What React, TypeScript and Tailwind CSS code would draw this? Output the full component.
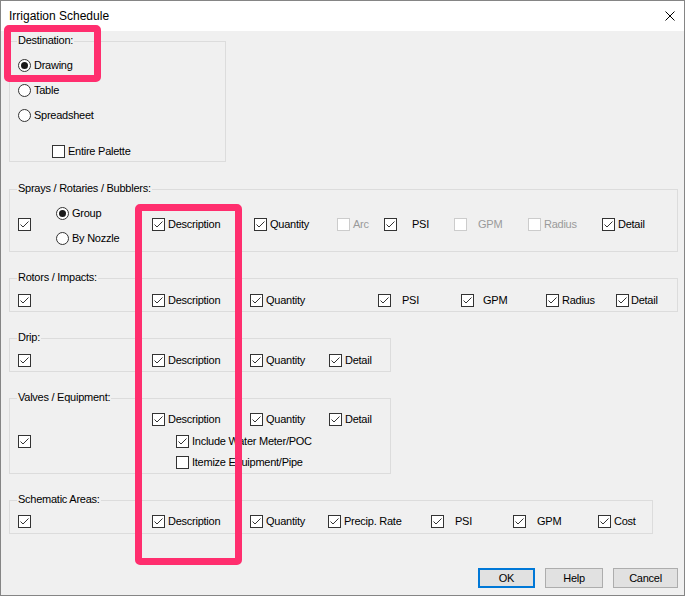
import type { ReactNode } from 'react';

function Tick() {
  return (
    <svg width="11" height="11" viewBox="0 0 11 11">
      <path d="M1.5 5.5 L4 8 L9.5 2.5" fill="none" stroke="#333333" strokeWidth="1" />
    </svg>
  );
}

type CheckProps = {
  label?: string;
  checked?: boolean;
  disabled?: boolean;
  className?: string;
  labelClass?: string;
};

function Check({ label, checked, disabled, className = '', labelClass = 'ml-[3px]' }: CheckProps) {
  return (
    <div className={`flex h-[13px] shrink-0 items-center ${className}`}>
      <span
        className={`flex h-[13px] w-[13px] shrink-0 items-center justify-center border bg-white ${
          disabled ? 'border-[#cccccc]' : 'border-[#333333]'
        }`}
      >
        {checked && <Tick />}
      </span>
      {label && (
        <span className={`whitespace-nowrap leading-[13px] ${disabled ? 'text-[#9a9a9a]' : ''} ${labelClass}`}>
          {label}
        </span>
      )}
    </div>
  );
}

function Radio({ label, checked }: { label: string; checked?: boolean }) {
  return (
    <div className="flex h-[13px] items-center">
      <span className="flex h-[13px] w-[13px] shrink-0 items-center justify-center rounded-full border border-[#333333] bg-white">
        {checked && <span className="h-[7px] w-[7px] rounded-full bg-[#1a1a1a]" />}
      </span>
      <span className="ml-[3px] whitespace-nowrap leading-[13px]">{label}</span>
    </div>
  );
}

function Group({ title, className, children }: { title: string; className: string; children: ReactNode }) {
  return (
    <div className={`relative shrink-0 border border-[#dcdcdc] pl-[8px] ${className}`}>
      <span className="absolute -top-[8px] left-[7px] bg-[#f0f0f0] px-[1px] leading-[13px]">{title}</span>
      {children}
    </div>
  );
}

function Button({ children, primary, className }: { children: ReactNode; primary?: boolean; className: string }) {
  return (
    <button
      className={`flex h-[20px] items-center justify-center bg-[#e1e1e1] leading-[13px] ${
        primary ? 'border-2 border-[#0078d7]' : 'border border-[#adadad]'
      } ${className}`}
    >
      {children}
    </button>
  );
}

export default function App() {
  return (
    <div className="relative h-[596px] w-[685px] overflow-hidden border border-[#858585] bg-[#f0f0f0] font-['Liberation_Sans',Arial,sans-serif] text-[11px] tracking-[-0.25px] text-black">
      {/* title bar */}
      <div className="flex h-[30px] items-center justify-between bg-white pl-[8px] pr-[9px]">
        <span className="text-[12px] tracking-normal">Irrigation Schedule</span>
        <svg width="10" height="10" viewBox="0 0 10 10" className="mb-[1px]">
          <path d="M0.5 0.5 L9.5 9.5 M9.5 0.5 L0.5 9.5" stroke="#000" strokeWidth="1" />
        </svg>
      </div>

      <div className="flex flex-col pl-[8px] pt-[10px]">
        <Group title="Destination:" className="h-[121px] w-[217px] pt-[17px]">
          <div className="flex flex-col gap-[12px]">
            <Radio checked label="Drawing" />
            <Radio label="Table" />
            <Radio label="Spreadsheet" />
          </div>
          <Check className="ml-[34px] mt-[23px]" label="Entire Palette" />
        </Group>

        <Group title="Sprays / Rotaries / Bubblers:" className="mt-[27px] h-[63px] w-[669px] pt-[17px]">
          <div className="flex items-start">
            <Check checked className="mt-[11px] w-[38px]" />
            <div className="flex w-[96px] flex-col gap-[12px]">
              <Radio checked label="Group" />
              <Radio label="By Nozzle" />
            </div>
            <div className="mt-[11px] flex">
              <Check checked className="w-[102px]" label="Description" />
              <Check checked className="w-[83px]" label="Quantity" />
              <Check disabled className="w-[47px]" label="Arc" />
              <Check checked className="w-[70px]" label="PSI" labelClass="ml-[15px]" />
              <Check disabled className="w-[74px]" label="GPM" labelClass="ml-[11px]" />
              <Check disabled className="w-[74px]" label="Radius" />
              <Check checked label="Detail" />
            </div>
          </div>
        </Group>

        <Group title="Rotors / Impacts:" className="mt-[26px] h-[34px] w-[669px] pt-[15px]">
          <div className="flex">
            <Check checked className="w-[134px]" />
            <Check checked className="w-[98px]" label="Description" />
            <Check checked className="w-[128px]" label="Quantity" />
            <Check checked className="w-[83px]" label="PSI" labelClass="ml-[11px]" />
            <Check checked className="w-[85px]" label="GPM" labelClass="ml-[9px]" />
            <Check checked className="w-[70px]" label="Radius" />
            <Check checked label="Detail" labelClass="ml-[2px]" />
          </div>
        </Group>

        <Group title="Drip:" className="mt-[26px] h-[34px] w-[382px] pt-[15px]">
          <div className="flex">
            <Check checked className="w-[134px]" />
            <Check checked className="w-[98px]" label="Description" />
            <Check checked className="w-[79px]" label="Quantity" />
            <Check checked label="Detail" />
          </div>
        </Group>

        <Group title="Valves / Equipment:" className="mt-[26px] h-[76px] w-[382px] pt-[14px]">
          <div className="flex items-start">
            <Check checked className="mt-[22px] w-[134px]" />
            <div className="flex flex-col">
              <div className="flex">
                <Check checked className="w-[98px]" label="Description" />
                <Check checked className="w-[79px]" label="Quantity" />
                <Check checked label="Detail" />
              </div>
              <Check checked className="ml-[24px] mt-[9px]" label="Include Water Meter/POC" />
              <Check className="ml-[24px] mt-[8px]" label="Itemize Equipment/Pipe" />
            </div>
          </div>
        </Group>

        <Group title="Schematic Areas:" className="mt-[26px] h-[34px] w-[644px] pt-[14px]">
          <div className="flex">
            <Check checked className="w-[134px]" />
            <Check checked className="w-[98px]" label="Description" />
            <Check checked className="w-[78px]" label="Quantity" />
            <Check checked className="w-[103px]" label="Precip. Rate" />
            <Check checked className="w-[82px]" label="PSI" labelClass="ml-[11px]" />
            <Check checked className="w-[85px]" label="GPM" labelClass="ml-[11px]" />
            <Check checked label="Cost" />
          </div>
        </Group>

        <div className="mt-[34px] flex justify-end gap-[10px] pr-[6px]">
          <Button primary className="w-[57px]">OK</Button>
          <Button className="w-[58px]">Help</Button>
          <Button className="w-[65px]">Cancel</Button>
        </div>
      </div>

      {/* annotation highlights */}
      <div className="pointer-events-none absolute left-[3px] top-[24px] h-[57px] w-[97px] rounded-[5px] border-[7px] border-[#ff2e6e]" />
      <div className="pointer-events-none absolute left-[134px] top-[203px] h-[361px] w-[107px] rounded-[5px] border-[7px] border-[#ff2e6e]" />
    </div>
  );
}
